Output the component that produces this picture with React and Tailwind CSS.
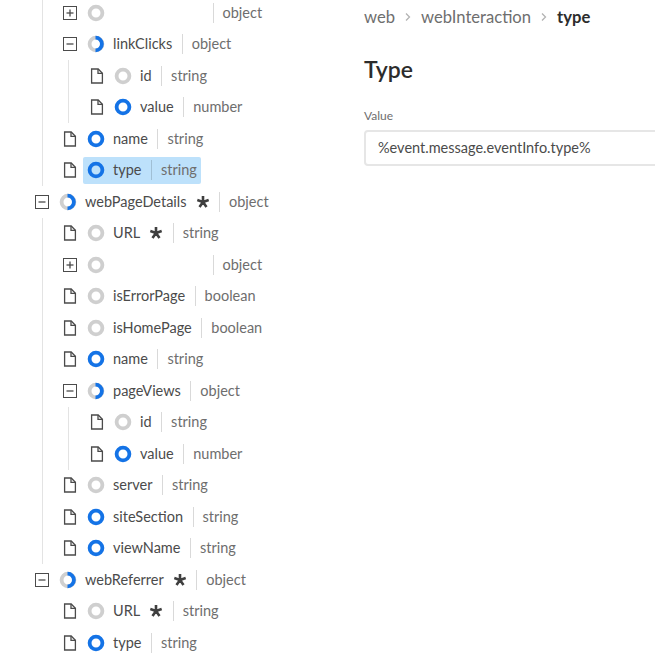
const tree = [
  { kind: "plus", status: "off", gap: 98, type: "object" },
  {
    kind: "minus", status: "half", name: "linkClicks", type: "object",
    children: [
      { kind: "file", status: "off", name: "id", type: "string" },
      { kind: "file", status: "on", name: "value", type: "number" },
    ],
  },
  { kind: "file", status: "on", name: "name", type: "string" },
  { kind: "file", status: "on", name: "type", type: "string", selected: true },
];

const pageDetails = [
  { kind: "file", status: "off", name: "URL", required: true, type: "string" },
  { kind: "plus", status: "off", gap: 98, type: "object" },
  { kind: "file", status: "off", name: "isErrorPage", type: "boolean" },
  { kind: "file", status: "off", name: "isHomePage", type: "boolean" },
  { kind: "file", status: "on", name: "name", type: "string" },
  {
    kind: "minus", status: "half", name: "pageViews", type: "object",
    children: [
      { kind: "file", status: "off", name: "id", type: "string" },
      { kind: "file", status: "on", name: "value", type: "number" },
    ],
  },
  { kind: "file", status: "off", name: "server", type: "string" },
  { kind: "file", status: "on", name: "siteSection", type: "string" },
  { kind: "file", status: "on", name: "viewName", type: "string" },
];

const referrer = [
  { kind: "file", status: "off", name: "URL", required: true, type: "string" },
  { kind: "file", status: "on", name: "type", type: "string" },
];

const KindIcon = ({ kind }) => {
  if (kind === "file") {
    return (
      <svg width="14" height="16" viewBox="0 0 14 16" fill="none" stroke="#4b4b4b" strokeWidth="1.3">
        <path d="M1.6 1h6.6L12.4 5.2V15H1.6z" />
        <path d="M8 1v4.4h4.4" />
      </svg>
    );
  }
  return (
    <svg width="14" height="14" viewBox="0 0 14 14" fill="none" stroke="#4b4b4b" strokeWidth="1">
      <rect x="0.5" y="0.5" width="13" height="13" />
      <path d="M3.5 7h7" strokeWidth="1.3" />
      {kind === "plus" && <path d="M7 3.5v7" strokeWidth="1.3" />}
    </svg>
  );
};

const StatusRing = ({ status }) => {
  const ring = status === "on" ? "#1473e6" : "#cfcfcf";
  return (
    <svg width="18" height="18" viewBox="0 0 18 18" fill="none" strokeWidth="3.8" className="shrink-0">
      <circle cx="9" cy="9" r="6.4" stroke={ring} />
      {status === "half" && <path d="M8.5 2.6a6.4 6.4 0 0 1 0 12.8" stroke="#1473e6" />}
    </svg>
  );
};

const RequiredMark = () => (
  <svg width="14" height="14" viewBox="0 0 14 14" className="ml-[9px] shrink-0" stroke="#3f3f3f" strokeWidth="2.6" strokeLinecap="butt">
    <path d="M7 1v6M7 7l5.7-1.9M7 7l3.5 5M7 7l-3.5 5M7 7L1.3 5.1" />
  </svg>
);

const Row = ({ item }) => (
  <div className="flex h-[31.5px] items-center">
    <div className="flex w-[21px] shrink-0 items-center">
      <KindIcon kind={item.kind} />
    </div>
    <div
      className={
        item.selected
          ? "ml-[-1px] flex h-[27px] items-center rounded-[2px] bg-[#bde1fb] pl-[4px] pr-[4px]"
          : "ml-[-1px] flex h-[27px] items-center pl-[4px] pr-[4px]"
      }
    >
      <StatusRing status={item.status} />
      {item.gap ? (
        <div style={{ width: item.gap }} />
      ) : (
        <span className="ml-[8px] text-[#4b4b4b]">{item.name}</span>
      )}
      {item.required && <RequiredMark />}
      <span className="ml-[9.5px] h-[20px] w-px bg-black/15" />
      <span className="ml-[9px] text-[#6e6e6e]">{item.type}</span>
    </div>
  </div>
);

const Branch = ({ items, last }) => (
  <div className={last ? "ml-[42px] border-l border-transparent pl-[20px]" : "ml-[42px] border-l border-[#e3e3e3] pl-[20px]"}>
    {items.map((item, i) => (
      <div key={i}>
        <Row item={item} />
        {item.children && <Nested items={item.children} />}
      </div>
    ))}
  </div>
);

const Nested = ({ items }) => (
  <div className="ml-[5px] border-l border-[#e3e3e3] pl-[21px]">
    {items.map((item, i) => (
      <Row key={i} item={item} />
    ))}
  </div>
);

const TopRow = ({ name, type }) => (
  <div className="pl-[35px]">
    <Row item={{ kind: "minus", status: "half", name, type, required: true }} />
  </div>
);

const Chevron = () => (
  <svg width="8" height="10" viewBox="0 0 8 10" fill="none" stroke="#b3b3b3" strokeWidth="1.3" className="mx-[9px]">
    <path d="M2 1.5 5.5 5 2 8.5" />
  </svg>
);

export default function App() {
  return (
    <div className="flex h-[659px] w-[655px] overflow-hidden bg-white font-['Lato',sans-serif] text-[14.5px]">
      <div className="mt-[-3px] w-[364px] shrink-0">
        <Branch items={tree} />
        <TopRow name="webPageDetails" type="object" />
        <Branch items={pageDetails} />
        <TopRow name="webReferrer" type="object" />
        <Branch items={referrer} last />
      </div>
      <div className="min-w-0 flex-1">
        <div className="mt-[6px] flex h-[22px] items-center text-[16.6px] text-[#6e6e6e]">
          <span>web</span>
          <Chevron />
          <span>webInteraction</span>
          <Chevron />
          <span className="font-bold text-[#2c2c2c]">type</span>
        </div>
        <h1 className="mt-[26px] text-[23px] leading-[30px] font-semibold text-[#2c2c2c]">Type</h1>
        <div className="mt-[24px] text-[12px] leading-[16px] text-[#6e6e6e]">Value</div>
        <div className="mt-[6px] flex h-[36px] w-[320px] items-center rounded-[4px] border-2 border-[#e6e6e6] pl-[12px] text-[14.5px] text-[#4b4b4b]">
          %event.message.eventInfo.type%
        </div>
      </div>
    </div>
  );
}
